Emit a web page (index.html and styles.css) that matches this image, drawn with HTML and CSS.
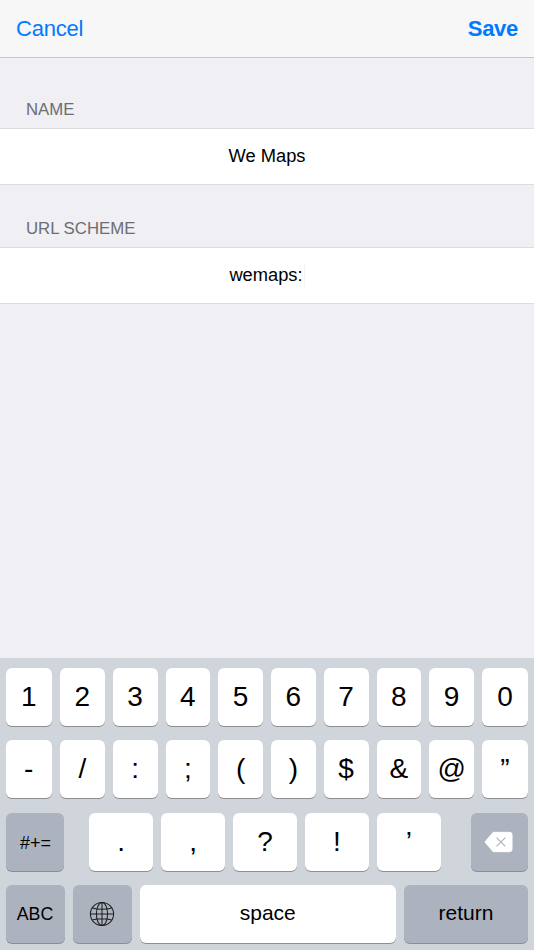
FILE: index.html
```html
<!DOCTYPE html>
<html lang="en">
<head>
    <meta charset="UTF-8">
    <meta name="viewport" content="width=device-width, initial-scale=1.0">
    <title>Edit Action</title>
    <link rel="stylesheet" href="styles.css">
</head>
<body>
    <div class="screen">
        <!-- Navigation bar -->
        <header class="navbar">
            <span class="nav-button">Cancel</span>
            <span class="nav-button nav-save">Save</span>
        </header>

        <!-- Form -->
        <main class="form">
            <div class="section-label label-name">NAME</div>
            <div class="field">We Maps</div>
            <div class="section-label label-scheme">URL SCHEME</div>
            <div class="field">wemaps:<span class="caret"></span></div>
        </main>

        <!-- Keyboard -->
        <section class="keyboard">
            <div class="key-row number-row">
                <div class="key">1</div>
                <div class="key">2</div>
                <div class="key">3</div>
                <div class="key">4</div>
                <div class="key">5</div>
                <div class="key">6</div>
                <div class="key">7</div>
                <div class="key">8</div>
                <div class="key">9</div>
                <div class="key">0</div>
            </div>
            <div class="key-row number-row">
                <div class="key">-</div>
                <div class="key">/</div>
                <div class="key">:</div>
                <div class="key">;</div>
                <div class="key">(</div>
                <div class="key">)</div>
                <div class="key">$</div>
                <div class="key">&amp;</div>
                <div class="key">@</div>
                <div class="key">”</div>
            </div>
            <div class="key-row punctuation-row">
                <div class="key key-dark key-symbols">#+=</div>
                <div class="punctuation">
                    <div class="key">.</div>
                    <div class="key">,</div>
                    <div class="key">?</div>
                    <div class="key">!</div>
                    <div class="key">’</div>
                </div>
                <div class="key key-dark key-delete">
                    <svg width="29" height="22" viewBox="0 0 30 22">
                        <path d="M9.5 1H26.5A2.5 2.5 0 0 1 29 3.5V18.500A2.500 2.500 0 0 1 26.500 21H9.500L1 11Z" fill="#fff" stroke="#fff" stroke-linejoin="round"/>
                        <path d="M13 6.500L22 15.500M22 6.500L13 15.500" fill="none" stroke="#acb3be" stroke-width="1.200"/>
                    </svg>
                </div>
            </div>
            <div class="key-row bottom-row">
                <div class="key key-dark key-label key-abc">ABC</div>
                <div class="key key-dark key-globe">
                    <svg width="26" height="26" viewBox="0 0 28 28" fill="none" stroke="#1c1c1e" stroke-width="1.100">
                        <circle cx="14" cy="14" r="12.500"/>
                        <ellipse cx="14" cy="14" rx="6" ry="12.500"/>
                        <path d="M14 1.500V26.500M1.500 14H26.500M3.600 7.500C9 9.500 19 9.500 24.400 7.500M3.600 20.500C9 18.500 19 18.500 24.400 20.500"/>
                    </svg>
                </div>
                <div class="key key-word key-space">space</div>
                <div class="key key-dark key-word key-return">return</div>
            </div>
        </section>
    </div>
</body>
</html>
```

FILE: styles.css
```css
/* General page style */
html, body {
    margin: 0;
    padding: 0;
}

body {
    font-family: 'Liberation Sans', Arial, sans-serif;
    background-color: #efeff4;
    color: #000;
}

.screen {
    width: 534px;
    height: 950px;
    display: flex;
    flex-direction: column;
    overflow: hidden;
}

/* Navigation bar */
.navbar {
    height: 57px;
    flex-shrink: 0;
    display: flex;
    align-items: center;
    justify-content: space-between;
    padding: 0 16px;
    background-color: #f7f7f8;
    border-bottom: 1px solid #c8c7cc;
}

.nav-button {
    font-size: 22px;
    letter-spacing: -0.2px;
    color: #007aff;
}

.nav-save {
    font-weight: bold;
    letter-spacing: -0.3px;
}

/* Form */
.form {
    flex: 1;
}

.section-label {
    height: 18px;
    padding-left: 26px;
    font-size: 16.800px;
    line-height: 18px;
    color: #6d6d72;
}

.label-name {
    margin-top: 43px;
    margin-bottom: 9px;
}

.label-scheme {
    margin-top: 35px;
    margin-bottom: 9px;
}

.field {
    height: 54px;
    padding-bottom: 1px;
    display: flex;
    align-items: center;
    justify-content: center;
    font-size: 18.300px;
    line-height: 20px;
    background-color: #fff;
    border-top: 1px solid #dcdce0;
    border-bottom: 1px solid #dcdce0;
}

.caret {
    width: 1px;
    height: 24px;
    margin-left: 1px;
    background-color: #f3f3f5;
}

/* Keyboard */
.keyboard {
    height: 282px;
    flex-shrink: 0;
    padding-top: 10px;
    display: flex;
    flex-direction: column;
    gap: 14.300px;
    background-color: #d0d5db;
}

.key-row {
    height: 58px;
    padding: 0 6px 0 5.500px;
}

.number-row {
    display: grid;
    grid-template-columns: 46.500px repeat(8, 1fr) 46px;
    column-gap: 8px;
}

.punctuation-row {
    display: flex;
}

.punctuation {
    width: 352px;
    margin: 0 auto 0 25.500px;
    display: grid;
    grid-template-columns: repeat(5, 1fr);
    column-gap: 7.600px;
}

.bottom-row {
    display: flex;
    column-gap: 8px;
}

.key {
    display: flex;
    align-items: center;
    justify-content: center;
    height: 58px;
    font-size: 28px;
    background-color: #fff;
    border-radius: 6px;
    box-shadow: 0 1px 0 #8b8e93;
}

.key-dark {
    background-color: #acb3be;
}

.key-symbols {
    width: 58px;
    padding: 3px 0 0 2px;
    box-sizing: border-box;
    font-size: 18px;
}

.key-delete {
    width: 57px;
    padding-right: 3px;
    box-sizing: border-box;
}

.key-label {
    padding-top: 2px;
    box-sizing: border-box;
    font-size: 17.800px;
}

.key-abc {
    width: 59px;
    margin-right: 0.500px;
}

.key-globe {
    width: 58.500px;
    padding-top: 1px;
    box-sizing: border-box;
}

.key-word {
    padding-bottom: 2px;
    box-sizing: border-box;
    font-size: 21px;
}

.key-space {
    flex: 1;
}

.key-return {
    width: 124px;
}
```
